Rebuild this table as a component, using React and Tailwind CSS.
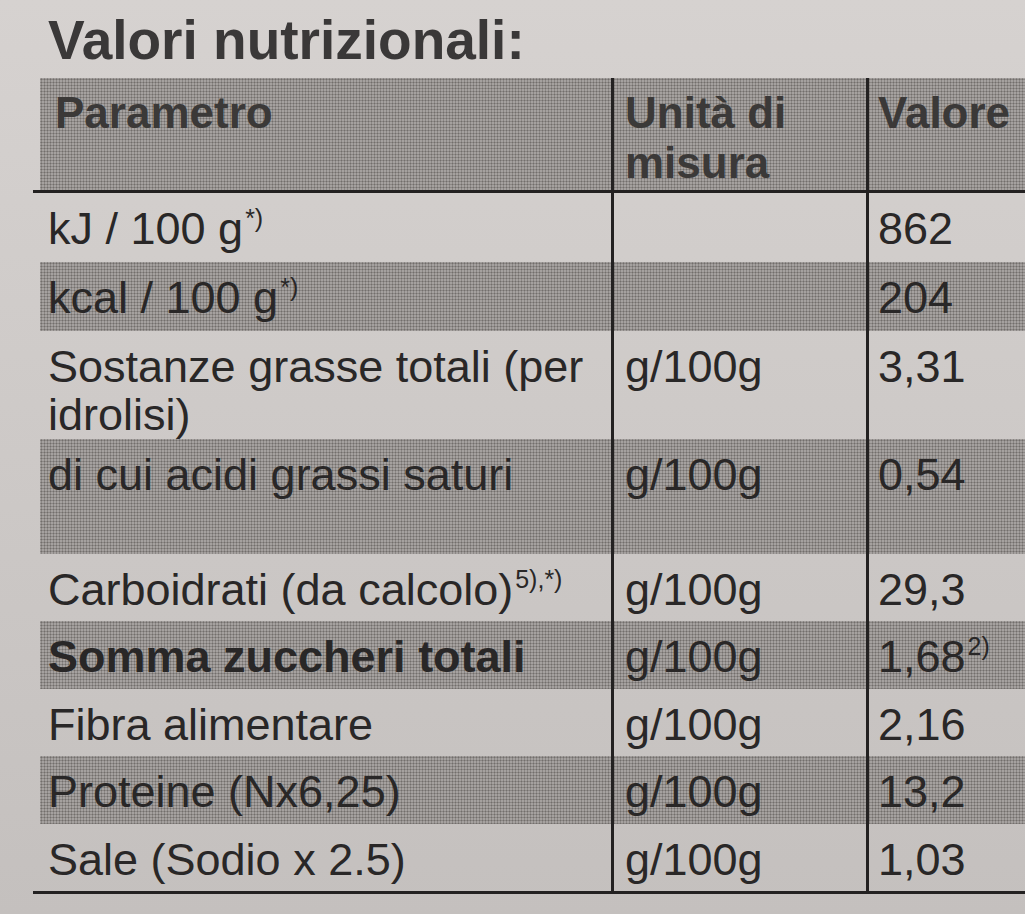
import React from "react";

const shade =
  "bg-[#a5a19f] bg-[radial-gradient(circle,#726e6b_0.8px,transparent_1.2px)] bg-[length:3px_3px]";

function Sup({ children }) {
  return <sup className="text-[25px] leading-none relative -top-[17px] ml-[2px]">{children}</sup>;
}

const rows = [
  { name: <>kJ / 100 g<Sup>*)</Sup></>, unit: "", value: "862", h: "h-[69px]" },
  { name: <>kcal / 100 g<Sup>*)</Sup></>, unit: "", value: "204", h: "h-[69px]", dark: true },
  { name: "Sostanze grasse totali (per idrolisi)", unit: "g/100g", value: "3,31", h: "h-[108px]" },
  { name: "di cui acidi grassi saturi", unit: "g/100g", value: "0,54", h: "h-[115px]", dark: true },
  { name: <>Carboidrati (da calcolo)<Sup>5),*)</Sup></>, unit: "g/100g", value: "29,3", h: "h-[67px]" },
  { name: <span className="font-bold">Somma zuccheri totali</span>, unit: "g/100g", value: <>1,68<Sup>2)</Sup></>, h: "h-[68px]", dark: true },
  { name: "Fibra alimentare", unit: "g/100g", value: "2,16", h: "h-[67px]" },
  { name: "Proteine (Nx6,25)", unit: "g/100g", value: "13,2", h: "h-[68px]", dark: true },
  { name: "Sale (Sodio x 2.5)", unit: "g/100g", value: "1,03", h: "h-[67px]" },
];

export default function App() {
  return (
    <div className="w-[1025px] h-[914px] overflow-hidden bg-linear-to-b from-[#d6d2d0] to-[#c4c0be] font-['Liberation_Sans',Arial,sans-serif] text-[#292727]">
      <h1 className="pl-[48px] pt-[13px] text-[55px] leading-none font-bold text-[#3a3838]">
        Valori nutrizionali:
      </h1>
      <div className="mt-[10px] ml-[40px] w-[1000px]">
        <div className={`grid grid-cols-[571px_255px_1fr] h-[112px] font-bold text-[44px] leading-[50px] text-[#3b3938] ${shade}`}>
          <div className="pl-[15px] pt-[10px]">Parametro</div>
          <div className="border-l-[3px] border-[#232121] pl-[11px] pt-[10px]">Unità di<br />misura</div>
          <div className="border-l-[3px] border-[#232121] pl-[9px] pt-[10px]">Valore</div>
        </div>
        <div className="border-t-[3px] border-[#232121] border-b-[3px] -ml-[7px] pl-[7px]">
          {rows.map((r, i) => (
            <div
              key={i}
              className={`grid grid-cols-[571px_255px_1fr] text-[45px] leading-[48px] ${r.h} ${r.dark ? shade : ""}`}
            >
              <div className="pl-[8px] pt-[12px] pr-[20px]">{r.name}</div>
              <div className="border-l-[3px] border-[#232121] pl-[11px] pt-[12px]">{r.unit}</div>
              <div className="border-l-[3px] border-[#232121] pl-[9px] pt-[12px]">{r.value}</div>
            </div>
          ))}
        </div>
      </div>
    </div>
  );
}
